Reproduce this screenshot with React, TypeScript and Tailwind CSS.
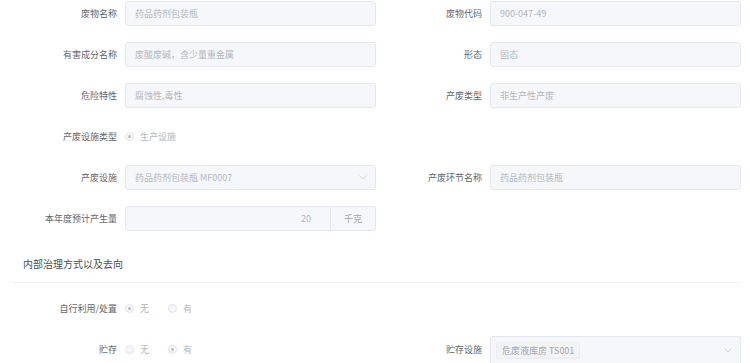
import React from 'react';

const font = { fontFamily: '"Noto Sans CJK SC", "Noto Sans", sans-serif' };

const Label = ({ children, className = '' }: { children: React.ReactNode; className?: string }) => (
  <div className={`shrink-0 pr-2 text-right text-[9px] text-[#64666b] ${className}`}>{children}</div>
);

const Field = ({ value, select }: { value: string; select?: boolean }) => (
  <div className="flex h-[25px] w-[251px] shrink-0 items-center justify-between rounded-[3px] border border-[#e4e7ed] bg-[#f5f7fa] pl-[9px] pr-[8px] text-[9px] text-[#b4b7bd]">
    <span>{value}</span>
    {select && <Chevron />}
  </div>
);

const Chevron = () => (
  <svg width="8" height="5" viewBox="0 0 8 5" fill="none">
    <path d="M0.5 0.5L4 4L7.5 0.5" stroke="#c8cbd1" strokeWidth="0.8" />
  </svg>
);

const Radio = ({ checked, label }: { checked?: boolean; label: string }) => (
  <div className="mr-[19px] flex items-center">
    <span className="flex h-[9px] w-[9px] items-center justify-center rounded-full border border-[#e1e4ea] bg-[#f5f7fa]">
      {checked && <span className="h-[3px] w-[3px] rounded-full bg-[#b9bcc2]" />}
    </span>
    <span className="ml-[6px] text-[9px] text-[#b4b7bd]">{label}</span>
  </div>
);

const Row = ({ children, className = '' }: { children: React.ReactNode; className?: string }) => (
  <div className={`flex h-[25px] items-center ${className}`}>{children}</div>
);

export default function App() {
  return (
    <div className="h-[363px] w-[750px] overflow-hidden bg-white pt-[1px]" style={font}>
      <Row className="mb-[16px]">
        <Label className="w-[125px]">废物名称</Label>
        <Field value="药品药剂包装瓶" />
        <Label className="w-[114px]">废物代码</Label>
        <Field value="900-047-49" />
      </Row>
      <Row className="mb-[16px]">
        <Label className="w-[125px]">有害成分名称</Label>
        <Field value="废酸废碱，含少量重金属" />
        <Label className="w-[114px]">形态</Label>
        <Field value="固态" />
      </Row>
      <Row className="mb-[16px]">
        <Label className="w-[125px]">危险特性</Label>
        <Field value="腐蚀性,毒性" />
        <Label className="w-[114px]">产废类型</Label>
        <Field value="非生产性产废" />
      </Row>
      <Row className="mb-[16px]">
        <Label className="w-[125px]">产废设施类型</Label>
        <Radio checked label="生产设施" />
      </Row>
      <Row className="mb-[16px]">
        <Label className="w-[125px]">产废设施</Label>
        <Field value="药品药剂包装瓶 MF0007" select />
        <Label className="w-[114px]">产废环节名称</Label>
        <Field value="药品药剂包装瓶" />
      </Row>
      <Row>
        <Label className="w-[125px]">本年度预计产生量</Label>
        <div className="flex h-[25px] w-[251px] text-[9px]">
          <div className="flex flex-1 items-center justify-end rounded-l-[3px] border border-[#e4e7ed] bg-[#f5f7fa] pr-[19px] text-[#b4b7bd]">
            20
          </div>
          <div className="flex w-[45px] items-center justify-center rounded-r-[3px] border border-l-0 border-[#e4e7ed] bg-[#f5f7fa] text-[#a3a6ad]">
            千克
          </div>
        </div>
      </Row>

      <div className="ml-[10px] mr-[9px] mt-[26px] border-b border-[#eef0f4] pb-[11px] pl-[13px] text-[10px] leading-[14px] text-[#4a4c51]">
        内部治理方式以及去向
      </div>

      <Row className="mt-[13px] mb-[16px]">
        <Label className="w-[125px]">自行利用/处置</Label>
        <Radio checked label="无" />
        <Radio label="有" />
      </Row>
      <div className="flex items-start">
        <Row>
          <Label className="w-[125px]">贮存</Label>
          <div className="flex w-[251px]">
            <Radio label="无" />
            <Radio checked label="有" />
          </div>
        </Row>
        <Row>
          <Label className="w-[114px]">贮存设施</Label>
        </Row>
        <div className="-mt-[1px] flex h-[30px] w-[251px] items-start justify-between rounded-t-[3px] border border-b-0 border-[#e4e7ed] bg-[#f5f7fa] pl-[5px] pr-[8px] pt-[5px]">
          <span className="rounded-[2px] border border-[#ebecee] bg-[#f2f3f5] px-[5px] text-[9px] leading-[15px] text-[#a4a7ad]">
            危废液库房 TS001
          </span>
          <span className="mt-[6px]">
            <Chevron />
          </span>
        </div>
      </div>
    </div>
  );
}
